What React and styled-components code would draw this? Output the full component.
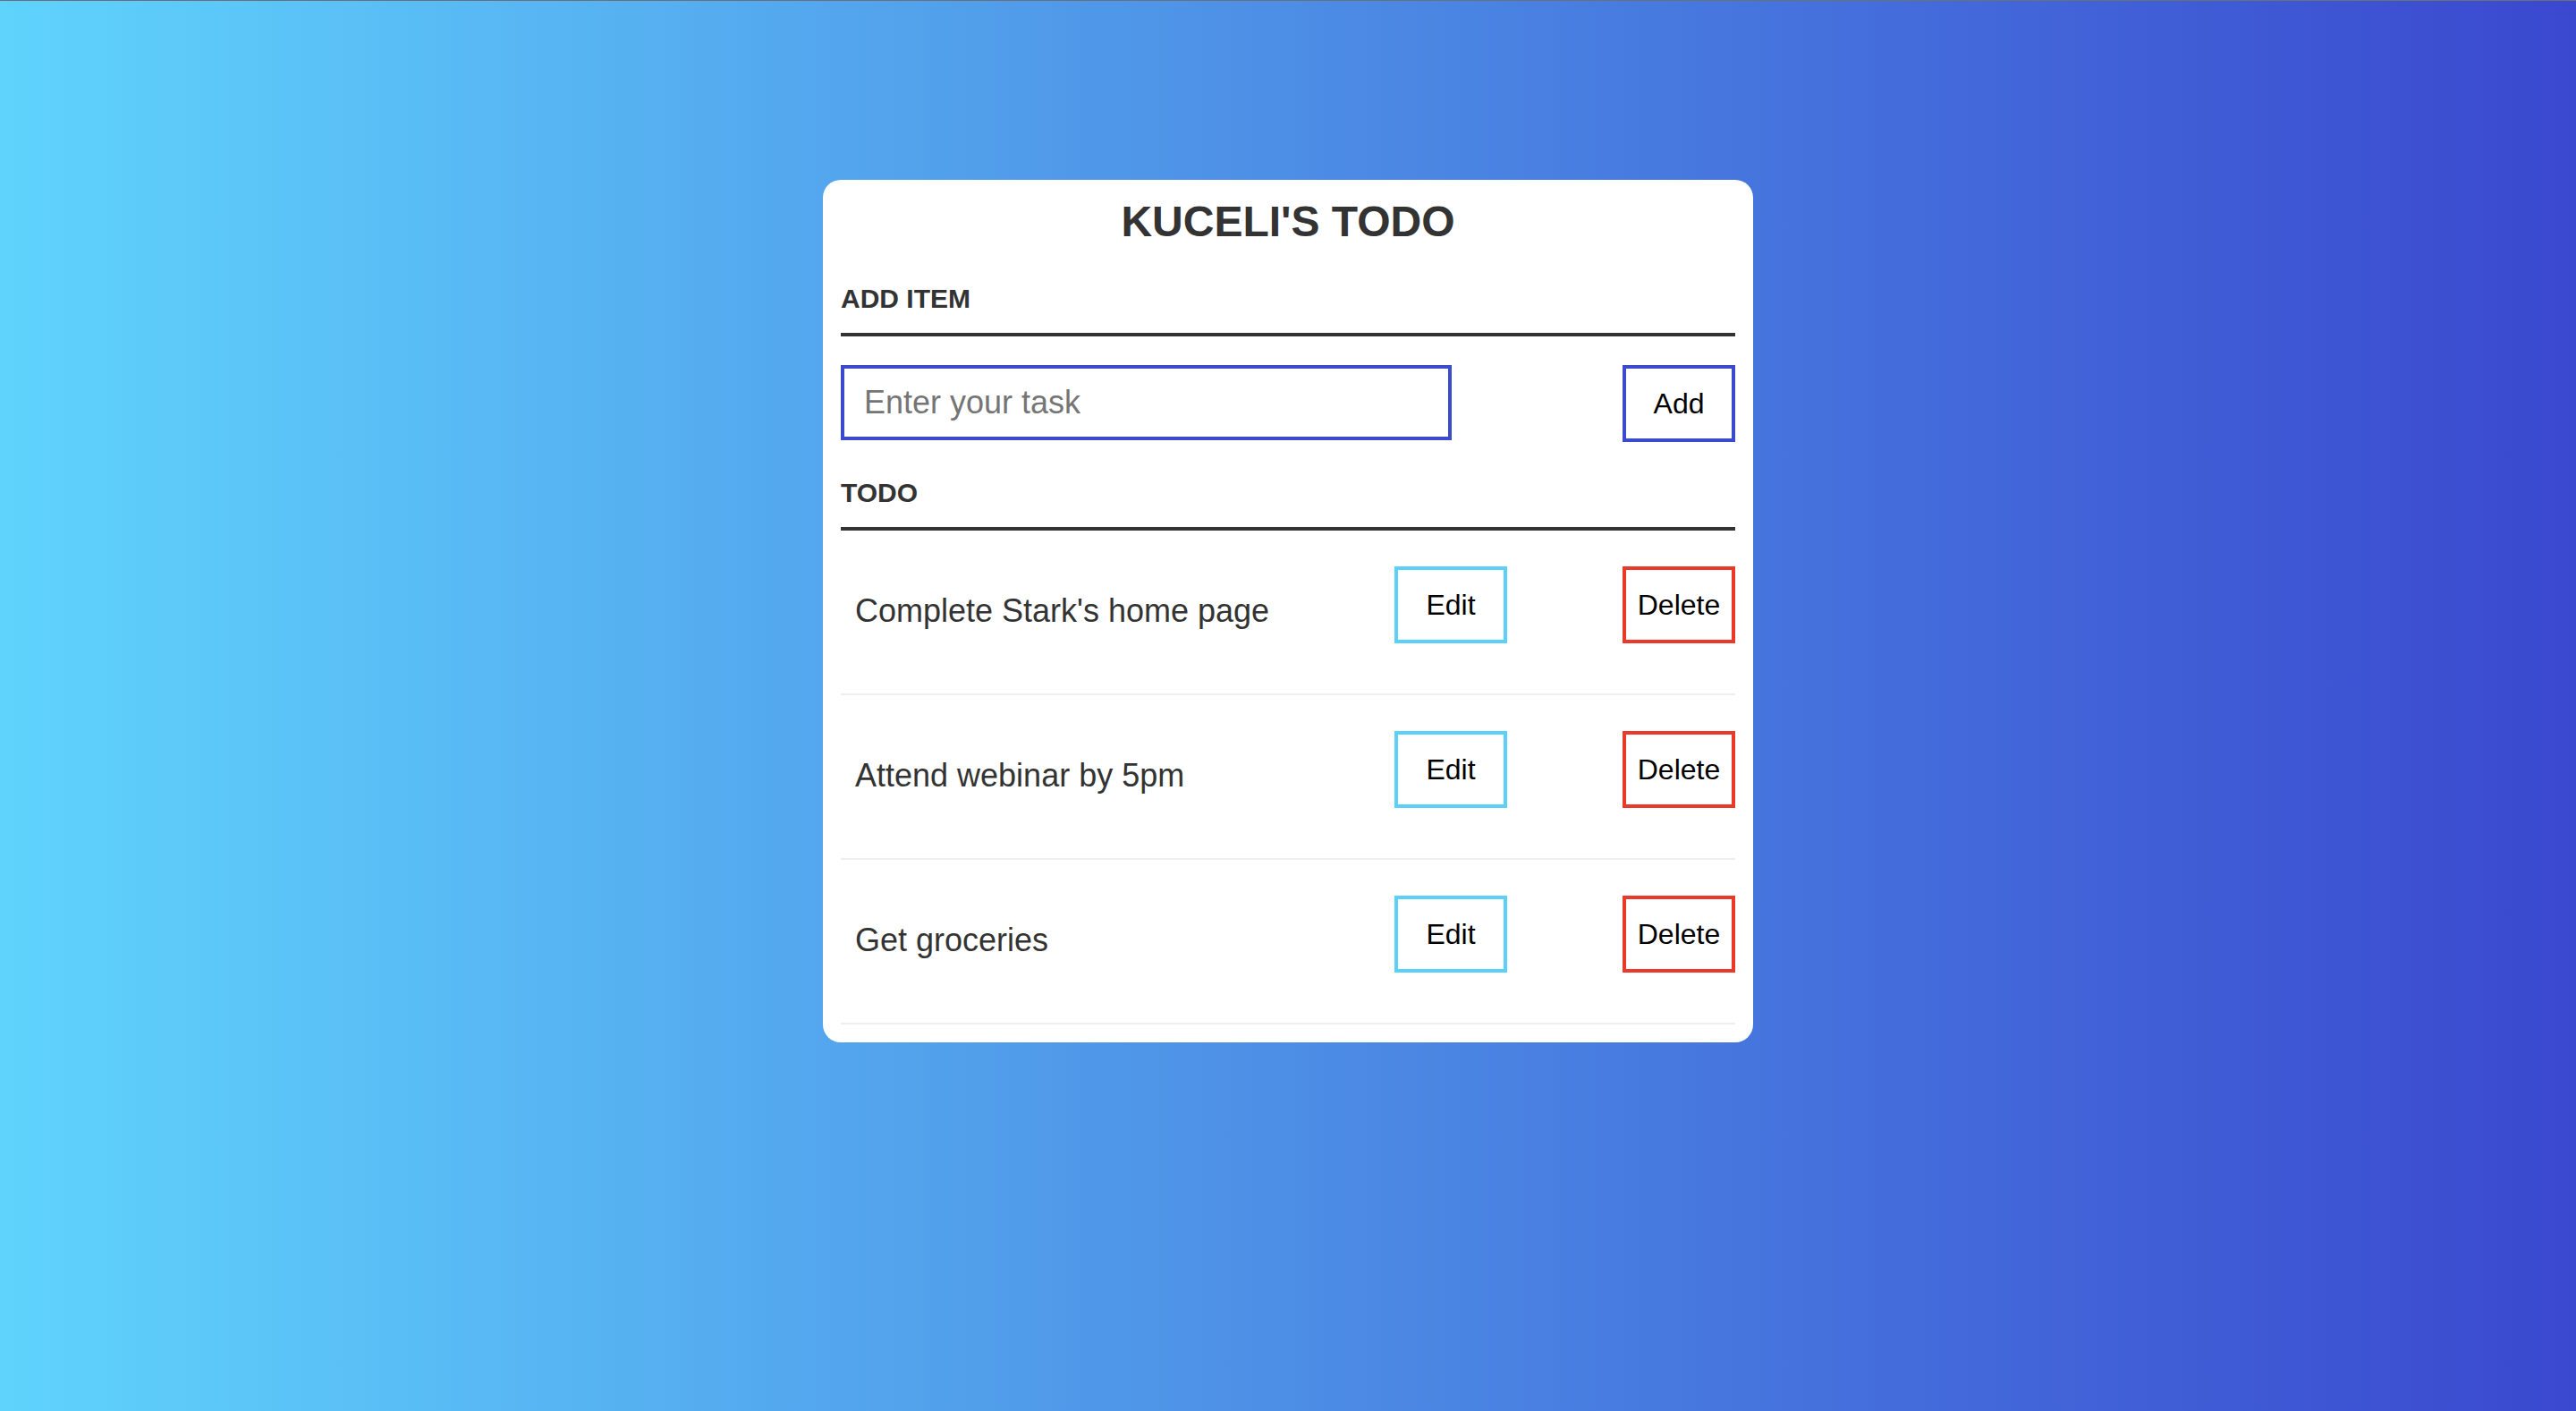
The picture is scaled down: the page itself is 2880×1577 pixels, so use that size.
import React, { useState } from 'react'
import styled, { createGlobalStyle } from 'styled-components'

const GlobalStyle = createGlobalStyle`
  * { box-sizing: border-box; }
  html, body {
    margin: 0;
    padding: 0;
    height: 100%;
  }
  body {
    font-family: "Liberation Sans", Arial, Helvetica, sans-serif;
    border-top: 1px solid #6b6f78;
    background: linear-gradient(to right, #5fd3fc, #3a48cf);
    min-height: 1577px;
  }
`

export default function App() {
  const [task, setTask] = useState('')
  const [todos, setTodos] = useState([
    "Complete Stark's home page",
    'Attend webinar by 5pm',
    'Get groceries'
  ])

  const addTodo = () => {
    if (!task.trim()) return
    setTodos([...todos, task.trim()])
    setTask('')
  }

  const removeTodo = index => setTodos(todos.filter((_, i) => i !== index))

  return (
    <>
      <GlobalStyle />
      <Page>
        <Card>
          <Title>KUCELI'S TODO</Title>
          <SectionTitle>ADD ITEM</SectionTitle>
          <InputRow>
            <TaskInput
              placeholder='Enter your task'
              value={task}
              onChange={e => setTask(e.target.value)}
            />
            <Button $color='#3a4bcd' onClick={addTodo}>Add</Button>
          </InputRow>
          <SectionTitle>TODO</SectionTitle>
          <List>
            {todos.map((todo, i) => (
              <Item key={todo + i}>
                <ItemText>{todo}</ItemText>
                <Actions>
                  <Button $color='#5bd0fa'>Edit</Button>
                  <Button $color='#e9392b' onClick={() => removeTodo(i)}>Delete</Button>
                </Actions>
              </Item>
            ))}
          </List>
        </Card>
      </Page>
    </>
  )
}

const Page = styled.div`
  display: flex;
  justify-content: center;
  padding-top: 200px;
`

const Card = styled.div`
  width: 1040px;
  background: #fff;
  border-radius: 20px;
  padding: 19px 20px 20px;
`

const Title = styled.h1`
  margin: 0 0 42px;
  text-align: center;
  font-size: 48px;
  font-weight: 700;
  color: #333;
`

const SectionTitle = styled.h3`
  margin: 0;
  padding-bottom: 21px;
  font-size: 30px;
  font-weight: 700;
  color: #333;
  border-bottom: 4px solid #333;
`

const InputRow = styled.div`
  display: flex;
  justify-content: space-between;
  align-items: flex-start;
  margin: 32px 0 40px;
`

const TaskInput = styled.input`
  width: 683px;
  height: 84px;
  padding: 0 22px;
  border: 4px solid #3a4bcd;
  outline: none;
  font-family: inherit;
  font-size: 36px;
  color: #333;

  &::placeholder {
    color: #757575;
  }
`

const Button = styled.button`
  width: 126px;
  height: 86px;
  padding: 0;
  background: #fff;
  border: 4px solid ${p => p.$color};
  font-family: inherit;
  font-size: 32px;
  color: #000;
  cursor: pointer;
`

const List = styled.ul`
  list-style: none;
  margin: 0;
  padding: 0;
`

const Item = styled.li`
  display: flex;
  align-items: flex-start;
  padding: 40px 0 56px;
  border-bottom: 2px solid #eee;
`

const ItemText = styled.span`
  flex: 1;
  padding: 29px 0 0 16px;
  font-size: 36px;
  color: #333;
`

const Actions = styled.div`
  display: flex;
  gap: 129px;
`
